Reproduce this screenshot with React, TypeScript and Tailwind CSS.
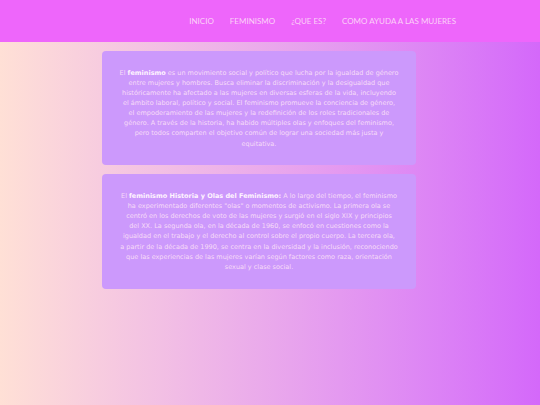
const NAV = ["INICIO", "FEMINISMO", "¿QUE ES?", "COMO AYUDA A LAS MUJERES"];

// line breaks follow the screenshot so the centred paragraphs wrap the same way
const CARD_ONE = [
  "es un movimiento social y político que lucha por la igualdad de género",
  "entre mujeres y hombres. Busca eliminar la discriminación y la desigualdad que",
  "históricamente ha afectado a las mujeres en diversas esferas de la vida, incluyendo",
  "el ámbito laboral, político y social. El feminismo promueve la conciencia de género,",
  "el empoderamiento de las mujeres y la redefinición de los roles tradicionales de",
  "género. A través de la historia, ha habido múltiples olas y enfoques del feminismo,",
  "pero todos comparten el objetivo común de lograr una sociedad más justa y",
  "equitativa.",
];

const CARD_TWO = [
  "A lo largo del tiempo, el feminismo",
  "ha experimentado diferentes \"olas\" o momentos de activismo. La primera ola se",
  "centró en los derechos de voto de las mujeres y surgió en el siglo XIX y principios",
  "del XX. La segunda ola, en la década de 1960, se enfocó en cuestiones como la",
  "igualdad en el trabajo y el derecho al control sobre el propio cuerpo. La tercera ola,",
  "a partir de la década de 1990, se centra en la diversidad y la inclusión, reconociendo",
  "que las experiencias de las mujeres varían según factores como raza, orientación",
  "sexual y clase social.",
];

function Card({ lead, lines }: { lead: string; lines: string[] }) {
  return (
    <section className="w-[314px] rounded-[4px] bg-[#cc99fc] px-[10px] py-[16.5px]">
      <p className="whitespace-nowrap text-center font-['DejaVu_Sans',Verdana,sans-serif] text-[6.5px] leading-[10.15px] text-[#f7dcf8]">
        {lines.map((line, i) => (
          <span key={i} className="block">
            {i === 0 && (
              <>
                El <b className="font-bold text-[#fff4ff]">{lead}</b>{" "}
              </>
            )}
            {line}
          </span>
        ))}
      </p>
    </section>
  );
}

export default function App() {
  return (
    <div className="min-h-screen bg-gradient-to-r from-[#ffe0d6] to-[#d468fa]">
      <header className="flex h-[42px] items-center justify-end gap-[16px] bg-[#ee66fb] pr-[84px] font-['Lato',sans-serif] text-[8px] text-[#fcd0f8]">
        {NAV.map((item) => (
          <a key={item} href="#">
            {item}
          </a>
        ))}
      </header>

      <main className="flex flex-col items-start gap-[9px] pl-[102px] pt-[9px]">
        <Card lead="feminismo" lines={CARD_ONE} />
        <Card lead="feminismo Historia y Olas del Feminismo:" lines={CARD_TWO} />
      </main>
    </div>
  );
}
